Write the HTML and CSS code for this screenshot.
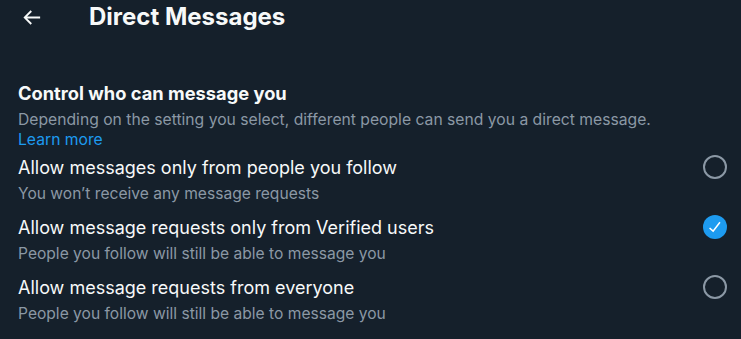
FILE: index.html
```html
<!DOCTYPE html>
<html lang="en">
<head>
<meta charset="UTF-8">
<title>Direct Messages</title>
<link rel="stylesheet" href="styles.css">
</head>
<body>
<div class="page">
  <div class="header">
    <div class="back">
      <svg viewBox="0 0 24 24" width="23" height="23"><path d="M7.414 13l5.043 5.04-1.414 1.42L3.586 12l7.457-7.46 1.414 1.42L7.414 11H21v2H7.414z"></path></svg>
    </div>
    <h2 class="title">Direct Messages</h2>
  </div>

  <div class="section">
    <h3 class="heading">Control who can message you</h3>
    <p class="desc">Depending on the setting you select, different people can send you a direct message.<br><a href="#">Learn more</a></p>
  </div>

  <div class="options">
    <label class="option">
      <div class="text">
        <div class="label">Allow messages only from people you follow</div>
        <div class="sub">You won’t receive any message requests</div>
      </div>
      <span class="radio"></span>
    </label>
    <label class="option">
      <div class="text">
        <div class="label">Allow message requests only from Verified users</div>
        <div class="sub">People you follow will still be able to message you</div>
      </div>
      <span class="radio checked">
        <svg viewBox="0 0 24 24" width="18" height="18"><path d="M9.64 18.952l-5.55-4.861 1.317-1.504 3.951 3.459 8.459-10.948L19.4 6.32 9.64 18.952z"></path></svg>
      </span>
    </label>
    <label class="option">
      <div class="text">
        <div class="label">Allow message requests from everyone</div>
        <div class="sub">People you follow will still be able to message you</div>
      </div>
      <span class="radio"></span>
    </label>
  </div>
</div>
</body>
</html>
```

FILE: styles.css
```css
html, body { margin: 0; padding: 0; background: #15202b; }
body { font-family: Inter, "Noto Sans", sans-serif; color: #f7f9f9; }

.page { width: 741px; height: 339px; overflow: hidden; }

.header { display: flex; align-items: center; height: 34px; padding-left: 17px; }
.back { width: 72px; height: 34px; display: flex; align-items: center; padding-left: 3px; box-sizing: border-box; }
.back svg { fill: #f7f9f9; }
.title { margin: 0; font-size: 24px; font-weight: 700; line-height: 28px; }

.section { padding: 47px 14px 0 18px; }
.heading { margin: 0; font-size: 18.3px; font-weight: 700; line-height: 24px; }
.desc { margin: 5px 0 0; font-size: 15.7px; line-height: 20px; color: #8b98a5; }
.desc a { color: #1d9bf0; text-decoration: none; }

.options { padding: 0 14px 0 18px; }
.option { display: flex; align-items: center; height: 60px; }
.text { flex: 1; }
.label { font-size: 18px; line-height: 24px; }
.sub { margin-top: 4px; font-size: 15.6px; line-height: 20px; color: #8b98a5; }

.radio { width: 20px; height: 20px; border: 2px solid #8b98a5; border-radius: 50%; display: flex; align-items: center; justify-content: center; margin-top: -26px; }
.radio.checked { width: 24px; height: 24px; border: 0; background: #1d9bf0; }
.radio.checked svg { fill: #fff; }
```
